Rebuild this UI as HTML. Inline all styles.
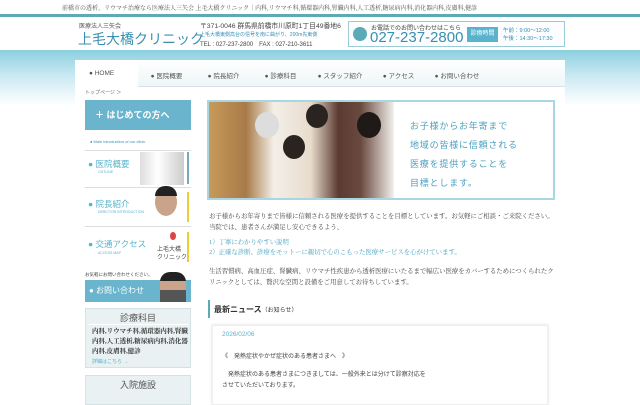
<!DOCTYPE html>
<html><head><meta charset="utf-8"><style>
*{margin:0;padding:0;box-sizing:border-box}
body{width:640px;height:400px;overflow:hidden;background:#fff;font-family:"Liberation Sans","Noto Sans CJK JP",sans-serif;color:#333;position:relative}
.a{position:absolute;white-space:nowrap}
.w{white-space:normal}
.serif{font-family:"Liberation Serif","Noto Serif CJK SC",serif}
</style></head><body>
<div class="a serif" style="left:62px;top:3px;font-size:6px;color:#555">前橋市の透析、リウマチ治療なら医療法人三矢会 上毛大橋クリニック｜内科,リウマチ科,循環器内科,腎臓内科,人工透析,糖尿病内科,消化器内科,皮膚科,健診</div>
<div class="a" style="left:0;top:14px;width:640px;height:3px;background:#5aaab8"></div>
<div class="a" style="left:0;top:50px;width:640px;height:55px;background:linear-gradient(#8ccfe0,#c8e8f1 45%,#fff)"></div>
<div class="a" style="left:79px;top:21px;font-size:6px;color:#555">医療法人三矢会</div>
<div class="a" style="left:78px;top:29px;font-size:14px;color:#3a8fb0">上毛大橋クリニック</div>
<div class="a" style="left:200px;top:20px;font-size:6.8px;color:#444">〒371-0046 群馬県前橋市川原町1丁目49番地6</div>
<div class="a" style="left:200px;top:31px;font-size:5px;color:#3a8fb0">上毛大橋東側高台の信号を南に曲がり、200m先東側</div>
<div class="a" style="left:200px;top:39px;font-size:6px;color:#444">TEL : 027-237-2800　FAX : 027-210-3611</div>
<div class="a" style="left:348px;top:21px;width:217px;height:26px;border:1px solid #9ccbd8;background:#fbfdfe"></div>
<div class="a" style="left:353px;top:27px;width:14px;height:14px;border-radius:50%;background:#5aaab8"></div>
<div class="a" style="left:371px;top:23px;font-size:6px;color:#444">お電話でのお問い合わせはこちら</div>
<div class="a" style="left:370px;top:29px;font-size:15px;color:#3a8fb0">027-237-2800</div>
<div class="a" style="left:467px;top:27px;width:31px;height:15px;background:#5ab3cc;color:#fff;font-size:6px;text-align:center;line-height:15px">診療時間</div>
<div class="a" style="left:503px;top:27px;font-size:5.5px;color:#3a8fb0;line-height:8px">午前：9:00〜12:00<br>午後：14:30〜17:30</div>
<div class="a" style="left:75px;top:60px;width:490px;height:340px;background:#fff"></div>
<div class="a" style="left:75px;top:60px;width:490px;height:27px;background:linear-gradient(#fff,#eef6f8);border-bottom:1px solid #dde"></div>
<div class="a" style="left:75px;top:60px;width:63px;height:27px;background:#fff"></div>
<div class="a" style="left:75px;top:70px;width:490px;font-size:6.5px;color:#555;display:flex">
<span style="width:63px;padding-left:14px">● HOME</span><span style="width:57px;text-align:center">● 医院概要</span><span style="width:57px;text-align:center">● 院長紹介</span><span style="width:57px;text-align:center">● 診療科目</span><span style="width:62px;text-align:center">● スタッフ紹介</span><span style="width:55px;text-align:center">● アクセス</span><span style="width:62px;text-align:center">● お問い合わせ</span></div>
<div class="a" style="left:85px;top:89px;font-size:5px;color:#666">トップページ ＞</div>
<div class="a" style="left:85px;top:100px;width:106px;height:30px;background:#6ab5cd;color:#fff;font-size:9px;line-height:30px;padding-left:10px;font-weight:bold">＋ はじめての方へ</div>
<div class="a" style="left:90px;top:139px;font-size:4px;color:#3a8fb0">● Main introduction of our clinic</div>
<div class="a" style="left:85px;top:150px;width:106px;height:38px;border-top:1px solid #ddd;border-bottom:1px solid #ddd"></div>
<div class="a" style="left:88px;top:158px;font-size:8.5px;color:#5ab3cc">● 医院概要</div>
<div class="a" style="left:98px;top:170px;font-size:3.5px;color:#5ab3cc">OUTLINE</div>
<div class="a" style="left:140px;top:152px;width:44px;height:33px;background:linear-gradient(90deg,#ddd,#fff 40%,#ccc)"></div>
<div class="a" style="left:187px;top:152px;width:2px;height:32px;background:#7ab"></div>
<div class="a" style="left:85px;top:190px;width:106px;height:37px;border-bottom:1px solid #ddd"></div>
<div class="a" style="left:88px;top:198px;font-size:8.5px;color:#5ab3cc">● 院長紹介</div>
<div class="a" style="left:98px;top:210px;font-size:3.5px;color:#5ab3cc">DIRECTOR INTRODUCTION</div>
<div class="a" style="left:155px;top:188px;width:22px;height:28px;border-radius:50%;background:#c9a48a"></div>
<div class="a" style="left:155px;top:186px;width:22px;height:10px;border-radius:10px 10px 0 0;background:#222"></div>
<div class="a" style="left:187px;top:192px;width:2px;height:30px;background:#ec3"></div>
<div class="a" style="left:88px;top:238px;font-size:8.5px;color:#5ab3cc">● 交通アクセス</div>
<div class="a" style="left:98px;top:251px;font-size:3.5px;color:#5ab3cc">ACCESS MAP</div>
<div class="a" style="left:157px;top:246px;font-size:6px;color:#444;line-height:8px">上毛大橋<br>クリニック</div>
<div class="a" style="left:170px;top:232px;width:6px;height:8px;border-radius:50%;background:#d44"></div>
<div class="a" style="left:187px;top:232px;width:2px;height:30px;background:#ec3"></div>
<div class="a" style="left:85px;top:272px;font-size:4.5px;color:#444">お気軽にお問い合わせください。</div>
<div class="a" style="left:85px;top:280px;width:106px;height:22px;background:#6ab5cd;color:#fff;font-size:8px;line-height:22px;padding-left:4px">● お問い合わせ</div>
<div class="a" style="left:160px;top:272px;width:26px;height:30px;background:linear-gradient(#222 30%,#c9a48a 30%,#c9a48a 60%,#555 60%);border-radius:10px 10px 0 0"></div>
<div class="a" style="left:85px;top:308px;width:106px;height:60px;background:#e9f1f2;border:1px solid #d3e2e4"></div>
<div class="a" style="left:85px;top:311px;width:106px;text-align:center;font-size:9px;color:#555">診療科目</div>
<div class="a" style="left:88px;top:324px;width:100px;height:1px;background:#fff"></div>
<div class="a serif w" style="left:92px;top:327px;width:96px;font-size:6.5px;line-height:10px;font-weight:bold;color:#333">内科,リウマチ科,循環器内科,腎臓内科,人工透析,糖尿病内科,消化器内科,皮膚科,健診</div>
<div class="a" style="left:92px;top:358px;font-size:5px;color:#5ab3cc">詳細はこちら →</div>
<div class="a" style="left:85px;top:375px;width:106px;height:30px;background:#e9f1f2;border:1px solid #d3e2e4"></div>
<div class="a" style="left:85px;top:378px;width:106px;text-align:center;font-size:9px;color:#555">入院施設</div>
<div class="a" style="left:207px;top:100px;width:348px;height:100px;border:2px solid #a8d7e3;background:#fff"></div>
<div class="a" style="left:209px;top:102px;width:185px;height:96px;background:linear-gradient(90deg,#c79a5a 0,#a87a48 20%,#f3efe8 35%,#e8dccd 55%,#5b3a32 70%,#6a4a3e 82%,#f3f1ee 100%)"></div>
<div class="a" style="left:255px;top:112px;width:24px;height:26px;border-radius:50%;background:#ddd"></div>
<div class="a" style="left:306px;top:104px;width:22px;height:24px;border-radius:50%;background:#2a2420"></div>
<div class="a" style="left:357px;top:112px;width:24px;height:26px;border-radius:50%;background:#1f1a18"></div>
<div class="a" style="left:283px;top:135px;width:22px;height:24px;border-radius:50%;background:#2a2420"></div>
<div class="a" style="left:410px;top:117px;font-size:9px;line-height:19px;color:#4aa0c0;letter-spacing:0.8px">お子様からお年寄まで<br>地域の皆様に信頼される<br>医療を提供することを<br>目標とします。</div>
<div class="a serif w" style="left:209px;top:211px;width:345px;font-size:6.4px;line-height:11px;color:#444">お子様からお年寄りまで皆様に信頼される医療を提供することを目標としています。お気軽にご相談・ご来院ください。当院では、患者さんが満足し安心できるよう、</div>
<div class="a serif" style="left:209px;top:238px;font-size:6.4px;line-height:10px;color:#4aa0c0">1）丁寧にわかりやすい説明<br>2）正確な診断、診療をモットーに親切で心のこもった医療サービスを心がけています。</div>
<div class="a serif w" style="left:209px;top:266px;width:345px;font-size:6.4px;line-height:11px;color:#444">生活習慣病、高血圧症、腎臓病、リウマチ性疾患から透析医療にいたるまで幅広い医療をカバーするためにつくられたクリニックとしては、贅沢な空間と設備をご用意してお待ちしています。</div>
<div class="a" style="left:208px;top:300px;width:2px;height:18px;background:#5aaab8"></div>
<div class="a" style="left:214px;top:304px;font-size:8px;color:#333;font-weight:bold">最新ニュース<span style="font-size:6px;font-weight:normal">（お知らせ）</span></div>
<div class="a" style="left:212px;top:325px;width:336px;height:80px;border:1px solid #eee;box-shadow:0 0 3px #ddd"></div>
<div class="a" style="left:222px;top:331px;font-size:6.5px;color:#5ab3cc">2026/02/06</div>
<div class="a" style="left:222px;top:351px;font-size:6px;color:#444">《　発熱症状やかぜ症状のある患者さまへ　》</div>
<div class="a" style="left:222px;top:370px;font-size:6px;color:#444;line-height:11px">　発熱症状のある患者さまにつきましては、一般外来とは分けて診察対応を<br>させていただいております。</div>
</body></html>
